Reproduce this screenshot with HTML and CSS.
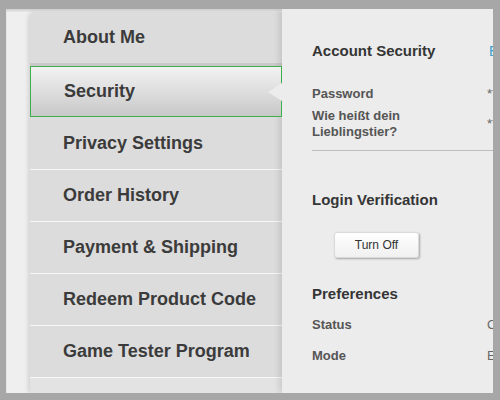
FILE: index.html
```html
<!DOCTYPE html>
<html>
<head>
<meta charset="utf-8">
<link rel="stylesheet" href="styles.css">
</head>
<body>
<div class="frame">
  <nav class="sidebar">
    <div class="item first">About Me</div>
    <div class="item selected">Security</div>
    <div class="item plain">Privacy Settings</div>
    <div class="item">Order History</div>
    <div class="item">Payment &amp; Shipping</div>
    <div class="item">Redeem Product Code</div>
    <div class="item">Game Tester Program</div>
    <div class="item last"></div>
  </nav>
  <main class="panel">
    <div class="head-row">
      <h2 class="heading wide">Account Security</h2>
      <span class="edit">Edit</span>
    </div>
    <div class="grid account">
      <div class="label">Password</div>
      <div class="value">********</div>
      <div class="label two">Wie heißt dein<br>Lieblingstier?</div>
      <div class="value">********</div>
    </div>
    <div class="rule"></div>
    <h2 class="heading login">Login Verification</h2>
    <button class="btn">Turn Off</button>
    <h2 class="heading prefs">Preferences</h2>
    <div class="grid prefs-grid">
      <div class="label">Status</div>
      <div class="value">On</div>
      <div class="label">Mode</div>
      <div class="value">Email</div>
    </div>
  </main>
</div>
</body>
</html>
```
FILE: styles.css
```css
html, body {
  margin: 0;
  padding: 0;
}
body {
  width: 500px;
  height: 400px;
  box-sizing: border-box;
  padding: 9px 7px 7px 6px;
  background: #a7a7a7;
  overflow: hidden;
  font-family: "Liberation Sans", Arial, sans-serif;
}
.frame {
  width: 487px;
  height: 384px;
  background: #efefef;
  display: flex;
  overflow: hidden;
  box-shadow: inset 0 2px 2px rgba(0,0,0,0.12);
}
.sidebar {
  margin: 3px 0 0 24px;
  width: 252px;
  flex: none;
  background: #dcdcdc;
  border-top-left-radius: 6px;
  box-shadow: -2px 0 4px rgba(0,0,0,0.12);
  overflow: hidden;
}
.item {
  box-sizing: border-box;
  height: 52px;
  border-top: 1px solid #f7f7f7;
  display: flex;
  align-items: center;
  padding-left: 33px;
  font-size: 18px;
  font-weight: bold;
  color: #3b3b3b;
}
.item.first {
  border-top: none;
  height: 54px;
  border-bottom: 3px solid #c9c9c9;
}
.item.selected {
  position: relative;
  border: 1px solid #3fae4b;
  height: 51px;
  background: linear-gradient(#f2f2f2 0%, #e4e4e4 35%, #c8c8c8 100%);
}
.item.selected::after {
  content: "";
  position: absolute;
  right: -1px;
  top: 16px;
  border-right: 14px solid #ececec;
  border-top: 9px solid transparent;
  border-bottom: 9px solid transparent;
}
.item.plain {
  border-top: none;
}
.item.last {
  background: #e3e3e3;
}
.panel {
  width: 260px;
  flex: none;
  background: #ececec;
  padding: 32px 0 0 30px;
  box-shadow: -3px 0 6px rgba(0,0,0,0.10);
}
.head-row {
  display: flex;
  align-items: center;
  height: 20px;
}
.heading {
  margin: 0;
  font-size: 15px;
  line-height: 20px;
  font-weight: bold;
  color: #353535;
}
.heading.wide {
  width: 177px;
  flex: none;
}
.edit {
  font-size: 14px;
  color: #3a9fcb;
}
.grid {
  display: grid;
  grid-template-columns: 175px auto;
  align-items: center;
  font-size: 13px;
  line-height: 16px;
}
.account {
  margin-top: 25px;
  row-gap: 6px;
}
.prefs-grid {
  margin-top: 13px;
  row-gap: 15px;
}
.label {
  font-weight: bold;
  color: #555;
}
.value {
  color: #666;
}
.rule {
  margin-top: 10px;
  width: 240px;
  height: 1px;
  background: #bdbdbd;
}
.heading.login {
  margin-top: 39px;
}
.btn {
  display: block;
  margin: 22px 0 0 22px;
  width: 85px;
  height: 26px;
  padding: 0;
  font-family: "Liberation Sans", Arial, sans-serif;
  font-size: 12px;
  color: #333;
  background: linear-gradient(#ffffff, #f0f0f0);
  border: 1px solid #dadada;
  border-radius: 3px;
  box-shadow: 1px 1px 2px rgba(0,0,0,0.3);
}
.heading.prefs {
  margin-top: 26px;
}
```
